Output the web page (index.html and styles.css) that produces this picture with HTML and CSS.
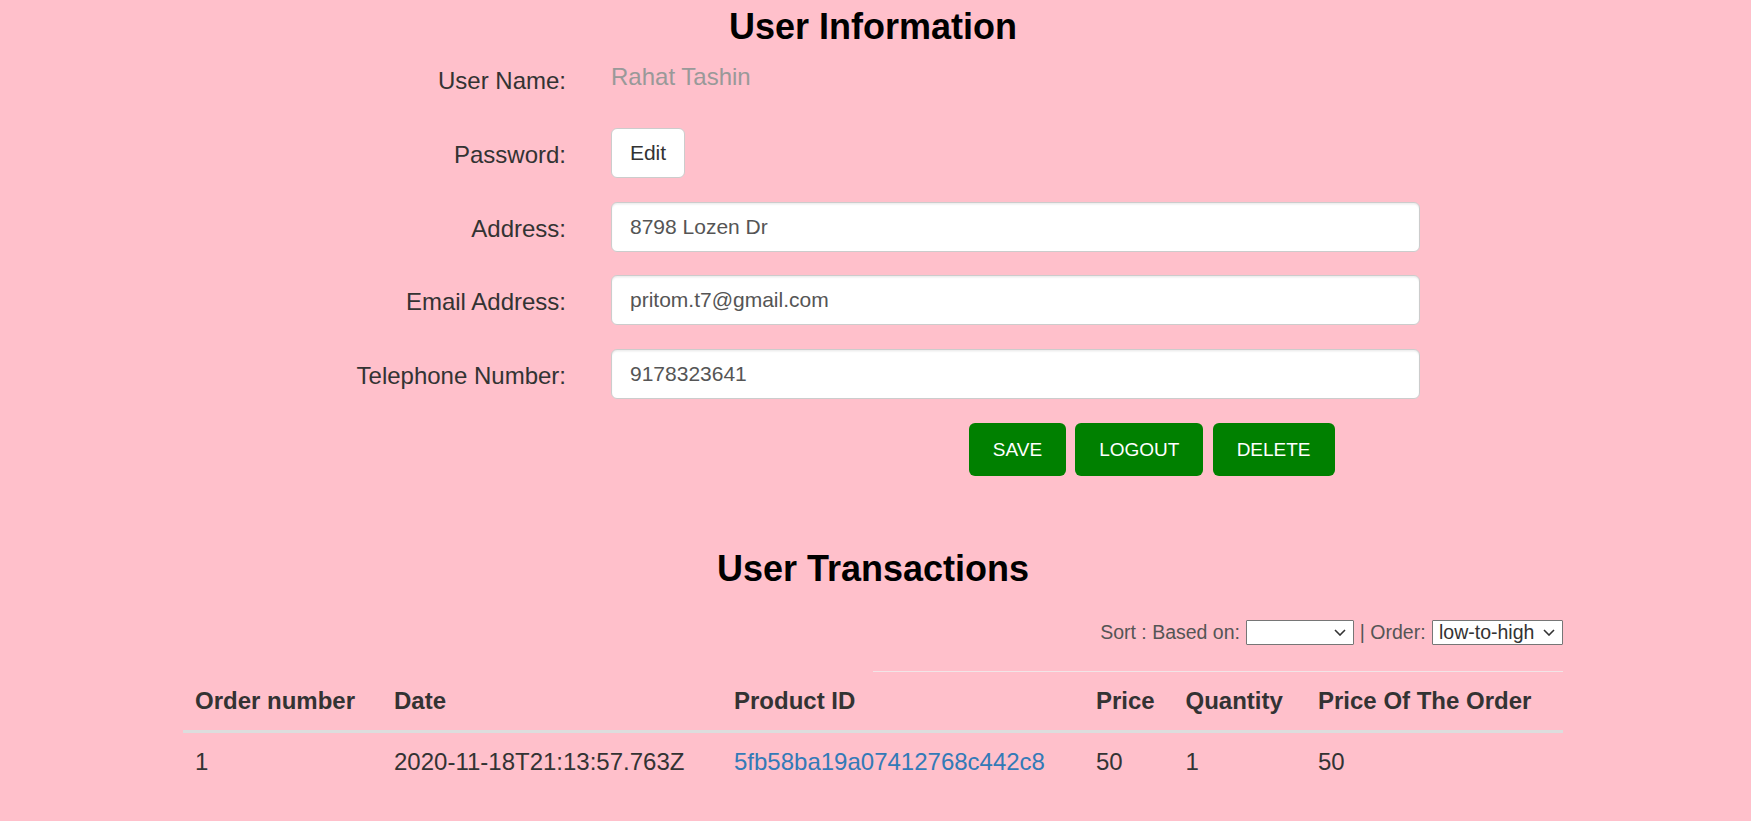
FILE: index.html
```html
<!DOCTYPE html>
<html>
<head>
<meta charset="utf-8">
<title>User Information</title>
<link rel="stylesheet" href="styles.css">
</head>
<body>
<div class="page">
  <div class="wrap">
    <div class="content">
      <h1 class="title">User Information</h1>
      <div class="form">
        <div class="row row-first">
          <label class="lbl">User Name:</label>
          <div class="field"><p class="static">Rahat Tashin</p></div>
        </div>
        <div class="row">
          <label class="lbl">Password:</label>
          <div class="field"><button class="btn-edit">Edit</button></div>
        </div>
        <div class="row">
          <label class="lbl">Address:</label>
          <div class="field"><input class="input" type="text" value="8798 Lozen Dr"></div>
        </div>
        <div class="row">
          <label class="lbl">Email Address:</label>
          <div class="field"><input class="input" type="text" value="pritom.t7@gmail.com"></div>
        </div>
        <div class="row">
          <label class="lbl">Telephone Number:</label>
          <div class="field"><input class="input" type="text" value="9178323641"></div>
        </div>
        <div class="actions">
          <button class="btn-green btn-save">SAVE</button>
          <button class="btn-green btn-logout">LOGOUT</button>
          <button class="btn-green btn-delete">DELETE</button>
        </div>
      </div>

      <h1 class="title title-tx">User Transactions</h1>

      <div class="sort">
        <span class="sort-text">Sort : Based on: </span>
        <span class="sel sel-a">
          <select class="select"><option></option></select>
          <svg class="chev" viewBox="0 0 12 7"><path d="M1 1 L6 6 L11 1" fill="none" stroke="#333" stroke-width="1.6"/></svg>
        </span>
        <span class="sort-text"> | Order: </span>
        <span class="sel sel-b">
          <select class="select"><option>low-to-high</option></select>
          <svg class="chev" viewBox="0 0 12 7"><path d="M1 1 L6 6 L11 1" fill="none" stroke="#333" stroke-width="1.6"/></svg>
        </span>
      </div>
      <div class="sort-line"></div>

      <table class="table">
        <colgroup>
          <col class="c1"><col class="c2"><col class="c3"><col class="c4"><col class="c5"><col class="c6">
        </colgroup>
        <thead>
          <tr>
            <th>Order number</th>
            <th>Date</th>
            <th>Product ID</th>
            <th>Price</th>
            <th>Quantity</th>
            <th>Price Of The Order</th>
          </tr>
        </thead>
        <tbody>
          <tr>
            <td>1</td>
            <td>2020-11-18T21:13:57.763Z</td>
            <td><a class="link" href="#">5fb58ba19a07412768c442c8</a></td>
            <td>50</td>
            <td>1</td>
            <td>50</td>
          </tr>
        </tbody>
      </table>
    </div>
  </div>
</div>
</body>
</html>
```
FILE: styles.css
```css
html, body {
  margin: 0;
  padding: 0;
  background: #ffffff;
}

body {
  font-family: "Liberation Sans", Arial, sans-serif;
  color: #333333;
}

.page {
  width: 1751px;
  height: 821px;
  background: #ffc0cb;
  overflow: hidden;
}

.wrap {
  width: 1746px;
}

.content {
  width: 1380px;
  margin: 0 auto;
}

.title {
  margin: 0;
  padding-top: 7px;
  font-size: 36px;
  line-height: 40px;
  font-weight: bold;
  color: #000000;
  text-align: center;
}

.form {
  margin-top: 7.8px;
}

.row {
  display: flex;
  align-items: flex-start;
  height: 51px;
  margin-bottom: 22.5px;
}

.row-first .lbl {
  padding-top: 9px;
}

.lbl {
  width: 383px;
  flex: none;
  text-align: right;
  font-size: 24px;
  line-height: 34px;
  padding-top: 10px;
  color: #333333;
}

.field {
  margin-left: 45px;
  width: 808px;
  flex: none;
}

.static {
  margin: 0;
  padding-top: 5px;
  font-size: 24px;
  line-height: 34px;
  color: #999999;
}

.btn-edit {
  display: flex;
  align-items: center;
  justify-content: center;
  width: 74px;
  height: 50px;
  padding: 0;
  margin: 0;
  background: #ffffff;
  border: 1px solid #cccccc;
  border-radius: 6px;
  font-family: "Liberation Sans", Arial, sans-serif;
  font-size: 21px;
  line-height: 30px;
  color: #333333;
}

.input {
  box-sizing: border-box;
  width: 809px;
  height: 50px;
  margin: 0;
  padding: 0 18px;
  border: 1px solid #cccccc;
  border-radius: 6px;
  background: #ffffff;
  box-shadow: inset 0 1.5px 1.5px rgba(0, 0, 0, 0.075);
  font-family: "Liberation Sans", Arial, sans-serif;
  font-size: 21px;
  color: #555555;
  outline: none;
}

.actions {
  display: flex;
  gap: 9.3px;
  padding-left: 786px;
  height: 53px;
  padding-top: 1px;
}

.btn-green {
  height: 53px;
  padding: 0;
  margin: 0;
  border: none;
  border-radius: 6px;
  background: #008000;
  color: #ffffff;
  font-family: "Liberation Sans", Arial, sans-serif;
  font-size: 19px;
  line-height: 24px;
}

.btn-save { width: 97px; }
.btn-logout { width: 128px; }
.btn-delete { width: 122px; }

.title-tx {
  padding-top: 0;
  margin-top: 73px;
}

.sort {
  display: flex;
  justify-content: flex-end;
  align-items: center;
  height: 25px;
  margin-top: 31px;
  font-size: 19.5px;
  color: #555555;
}

.sort-text {
  white-space: pre;
  line-height: 25px;
}

.sel {
  position: relative;
  display: block;
  height: 25px;
}

.sel-a { width: 108px; margin-left: 1px; }
.sel-b { width: 131px; margin-left: 1px; }

.select {
  -webkit-appearance: none;
  appearance: none;
  box-sizing: border-box;
  width: 100%;
  height: 25px;
  margin: 0;
  padding: 0 0 0 6px;
  border: 1px solid #767676;
  border-radius: 1px;
  background: #ffffff;
  font-family: "Liberation Sans", Arial, sans-serif;
  font-size: 19.5px;
  line-height: 23px;
  color: #333333;
}

.chev {
  position: absolute;
  top: 9px;
  right: 8px;
  width: 12px;
  height: 7px;
  pointer-events: none;
}

.sort-line {
  margin-top: 26px;
  margin-left: 690px;
  width: 690px;
  height: 0;
  border-top: 1px solid #f2e4e7;
}

.table {
  width: 1380px;
  border-collapse: collapse;
  table-layout: fixed;
  font-size: 24px;
  color: #333333;
}

.c1 { width: 199px; }
.c2 { width: 340px; }
.c3 { width: 362px; }
.c4 { width: 89.5px; }
.c5 { width: 132.5px; }
.c6 { width: 257px; }

.table th {
  text-align: left;
  vertical-align: bottom;
  font-weight: bold;
  padding: 12px;
  line-height: 34px;
  border-bottom: 3px solid #dddddd;
  white-space: nowrap;
}

.table td {
  text-align: left;
  vertical-align: top;
  padding: 12px;
  line-height: 34px;
  white-space: nowrap;
}

.link {
  color: #337ab7;
  text-decoration: none;
}
```
